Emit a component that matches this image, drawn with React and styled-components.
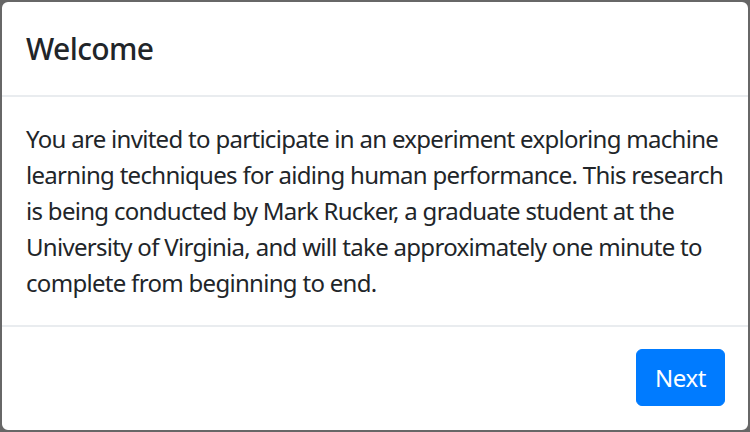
import React from "react";
import styled, { createGlobalStyle } from "styled-components";

const Global = createGlobalStyle`
  html, body { margin: 0; padding: 0; background: #676767; }
  body { font-family: "Noto Sans", "Open Sans", sans-serif; color: #212529; }
  * { box-sizing: border-box; }
`;

const Modal = styled.div`
  width: 750px;
  height: 432px;
  background: #fff;
  border: 2px solid #676767;
  border-radius: 8px;
  display: flex;
  flex-direction: column;
  overflow: hidden;
`;

const Header = styled.div`
  padding: 24px;
  border-bottom: 2px solid #e9ecef;
`;

const Title = styled.h5`
  margin: 0;
  font-size: 30px;
  line-height: 45px;
  font-weight: 500;
  letter-spacing: -0.6px;
`;

const Body = styled.div`
  padding: 24px;
  border-bottom: 2px solid #e9ecef;
`;

const Text = styled.p`
  margin: 0;
  font-size: 24px;
  line-height: 36px;
  letter-spacing: -0.7px;
`;

const Line = styled.span`
  display: block;
  white-space: nowrap;
`;

const Footer = styled.div`
  flex: 1;
  display: flex;
  justify-content: flex-end;
  align-items: flex-start;
  padding: 16px 17px 18px 18px;
`;

const Button = styled.button`
  margin: 6px;
  height: 57px;
  padding: 0 18px;
  background: #007bff;
  border: 1.5px solid #007bff;
  border-radius: 6px;
  color: #fff;
  font-family: inherit;
  font-size: 24px;
  line-height: 36px;
  letter-spacing: -0.4px;
  cursor: pointer;
`;

const lines = [
  "You are invited to participate in an experiment exploring machine",
  "learning techniques for aiding human performance. This research",
  "is being conducted by Mark Rucker, a graduate student at the",
  "University of Virginia, and will take approximately one minute to",
  "complete from beginning to end.",
];

export default function App() {
  return (
    <>
      <Global />
      <Modal>
        <Header>
          <Title>Welcome</Title>
        </Header>
        <Body>
          <Text>
            {lines.map((l) => (
              <Line key={l}>{l}</Line>
            ))}
          </Text>
        </Body>
        <Footer>
          <Button>Next</Button>
        </Footer>
      </Modal>
    </>
  );
}
